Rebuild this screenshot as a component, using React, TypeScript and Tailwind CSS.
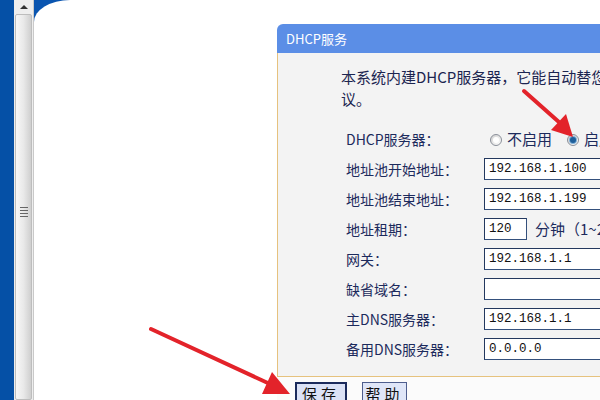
const cjk = "font-['Noto_Sans_CJK_SC','Noto_Sans',sans-serif]"
const mono = "font-['Liberation_Mono','DejaVu_Sans_Mono',monospace]"

const rows: { label: string; value?: string; kind?: "lease" | "empty" }[] = [
    { label: "地址池开始地址：", value: "192.168.1.100" },
    { label: "地址池结束地址：", value: "192.168.1.199" },
    { label: "地址租期：", value: "120", kind: "lease" },
    { label: "网关：", value: "192.168.1.1" },
    { label: "缺省域名：", value: "" },
    { label: "主DNS服务器：", value: "192.168.1.1" },
    { label: "备用DNS服务器：", value: "0.0.0.0" },
]

function TextBox({ value, narrow }: { value: string; narrow?: boolean }) {
    return (
        <div
            className={`h-[22px] ${narrow ? "w-[43px]" : "w-[160px]"} shrink-0 bg-white border border-[#34507c] border-t-[#23385e] border-l-[#23385e] flex items-center pl-[4px] ${mono} text-[12.5px] text-[#111]`}
        >
            {value}
        </div>
    )
}

function Radio({ checked }: { checked?: boolean }) {
    return (
        <span className="w-[12px] h-[12px] rounded-full border border-[#8a8f99] bg-gradient-to-br from-[#d0d0d0] to-white flex items-center justify-center shrink-0">
            {checked ? (
                <span className="w-[6px] h-[6px] rounded-full bg-[#1f5f9a] shadow-[0_0_0_1px_#7fb0d8]" />
            ) : (
                <span className="w-[6px] h-[6px] rounded-full bg-white" />
            )}
        </span>
    )
}

export default function App() {
    return (
        <div className="relative w-[600px] h-[400px] overflow-hidden flex bg-white">
            {/* frame strip */}
            <div className="w-[14px] shrink-0 h-full bg-[#0550a6]" />

            {/* scrollbar */}
            <div className="w-[20px] shrink-0 h-full flex flex-col bg-[#eeeeee] border-r border-[#c9c9c9]">
                <div className="h-[14px] flex items-center justify-center">
                    <span className="w-0 h-0 border-l-[4px] border-r-[4px] border-b-[4px] border-l-transparent border-r-transparent border-b-[#333]" />
                </div>
                <div className="flex-1 mx-[1px] border border-[#bdbdbd] rounded-[2px] bg-gradient-to-r from-[#f7f7f7] via-[#e9e9e9] to-[#cfcfcf] flex flex-col items-center pt-[192px] gap-[2px]">
                    <span className="w-[8px] h-px bg-[#666]" />
                    <span className="w-[8px] h-px bg-[#666]" />
                    <span className="w-[8px] h-px bg-[#666]" />
                    <span className="w-[8px] h-px bg-[#666]" />
                </div>
            </div>

            {/* page */}
            <div className="flex-1 min-w-0 h-full bg-[#0a55b0] overflow-hidden">
                <div className="h-full bg-white rounded-tl-[36px_22px] pl-[243px] pt-[24px]">
                    <div className={`w-[340px] ${cjk}`}>
                        <div className="h-[29px] bg-[#5b8ee6] rounded-tl-[6px] flex items-center pl-[9px] text-[13px] text-white">
                            DHCP服务
                        </div>
                        <div className="h-[324px] bg-[#f3f3f3] border-l border-b border-[#e6c27e] pt-[13px]">
                            <div className="pl-[63px] text-[15px] leading-[22px] text-[#1c2550] whitespace-nowrap">
                                <div>本系统内建DHCP服务器，它能自动替您配置局域网中各计算机的TCP/IP协</div>
                                <div>议。</div>
                            </div>
                            <div className="mt-[15px] pl-[68px] text-[14px] text-[#1c2a5c]">
                                <div className="h-[29px] flex items-center">
                                    <span className="w-[138px] shrink-0">DHCP服务器：</span>
                                    <div className="flex items-center whitespace-nowrap">
                                        <span className="ml-[6px]"><Radio /></span>
                                        <span className="ml-[5px] text-[15px]">不启用</span>
                                        <span className="ml-[15px]"><Radio checked /></span>
                                        <span className="ml-[5px] text-[15px]">启用</span>
                                    </div>
                                </div>
                                {rows.map((r) => (
                                    <div key={r.label} className="h-[30px] flex items-center whitespace-nowrap">
                                        <span className="w-[138px] shrink-0">{r.label}</span>
                                        {r.kind === "lease" ? (
                                            <>
                                                <TextBox value={r.value ?? ""} narrow />
                                                <span className="ml-[8px] text-[15px]">分钟（1~2880分钟）</span>
                                            </>
                                        ) : (
                                            <TextBox value={r.value ?? ""} />
                                        )}
                                    </div>
                                ))}
                            </div>
                        </div>
                        <div className="bg-[#fbfbfb] h-[40px] flex items-start pt-[5px] pl-[18px] gap-[15px]">
                            <button className="w-[52px] h-[24px] border-2 border-[#1b2b5c] bg-[#dbe2f6] text-[15px] text-[#111] tracking-[4px] flex items-center justify-center">
                                保存
                            </button>
                            <button className="w-[45px] h-[24px] border border-[#4e5e8e] bg-[#dfe6f8] text-[15px] text-[#111] tracking-[4px] flex items-center justify-center">
                                帮助
                            </button>
                        </div>
                    </div>
                </div>
            </div>

            {/* red annotation arrows drawn on top */}
            <svg className="absolute inset-0 pointer-events-none" width="600" height="400" viewBox="0 0 600 400">
                <line x1="524" y1="91" x2="560" y2="123" stroke="#e3232a" strokeWidth="4" strokeLinecap="round" />
                <polygon points="573,137 551,130 566,114" fill="#e3232a" />
                <line x1="151" y1="329" x2="270" y2="384" stroke="#e3232a" strokeWidth="4" strokeLinecap="round" />
                <polygon points="290,394 262,394 272,372" fill="#e3232a" />
            </svg>
        </div>
    )
}
